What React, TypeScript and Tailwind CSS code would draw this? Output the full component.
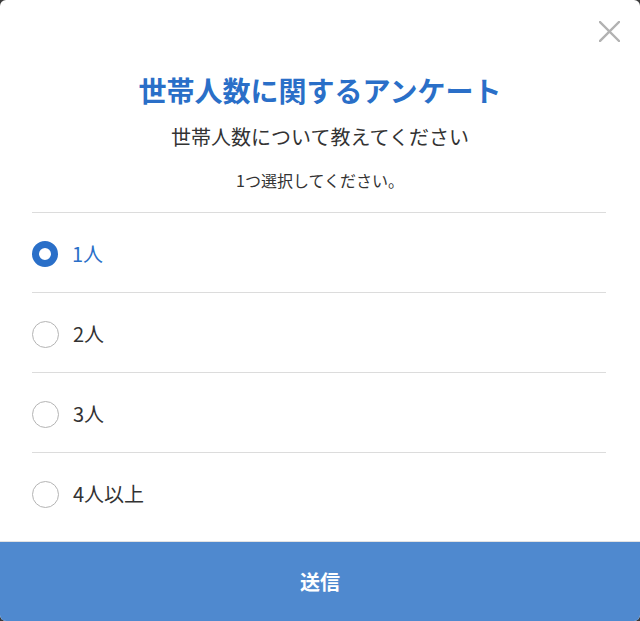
import React, { useState } from "react";

const options = ["1人", "2人", "3人", "4人以上"];

export default function App() {
  const [selected, setSelected] = useState(0);
  return (
    <div className="w-[640px] h-[621px] bg-[#3a3a3a]">
      <div
        className="relative flex h-[621px] w-[640px] flex-col overflow-hidden rounded-[6px] bg-white text-[#333]"
        style={{ fontFamily: '"Noto Sans CJK JP", "Noto Sans", sans-serif' }}
      >
        <button className="absolute right-[20px] top-[21px] h-[21px] w-[21px]" aria-label="close">
          <svg viewBox="0 0 21 21" width="21" height="21">
            <path d="M1 1L20 20M20 1L1 20" stroke="#b2b2b2" strokeWidth="2.4" strokeLinecap="square" />
          </svg>
        </button>
        <h1 className="mt-[70px] text-center text-[28px] font-bold leading-[40px] text-[#2a6fc8]">
          世帯人数に関するアンケート
        </h1>
        <p className="mt-[13px] text-center text-[20px] leading-[28px] text-[#333]">
          世帯人数について教えてください
        </p>
        <p className="mt-[17px] text-center text-[16px] leading-[24px] text-[#333]">
          1つ選択してください。
        </p>
        <div className="ml-[32px] mr-[34px] mt-[20px] flex flex-col">
          {options.map((o, i) => {
            const active = i === selected;
            return (
              <div
                key={o}
                onClick={() => setSelected(i)}
                className="flex h-[80px] cursor-pointer items-center gap-[14px] border-t border-[#dcdcdc] pt-[3px]"
              >
                {active ? (
                  <span className="box-border h-[26px] w-[26px] rounded-full border-[7px] border-[#2a6fc8] bg-white" />
                ) : (
                  <span className="box-border h-[27px] w-[27px] rounded-full border-[1.5px] border-[#b4b4b4] bg-white" />
                )}
                <span className={`text-[20px] leading-[28px] ${active ? "text-[#2a6fc8]" : "text-[#333]"}`}>{o}</span>
              </div>
            );
          })}
        </div>
        <div className="mt-auto border-t border-[#e2e2e2]">
          <button className="flex h-[79px] w-full items-center justify-center bg-[#4f89cf] text-[20px] font-bold text-white">
            送信
          </button>
        </div>
      </div>
    </div>
  );
}
